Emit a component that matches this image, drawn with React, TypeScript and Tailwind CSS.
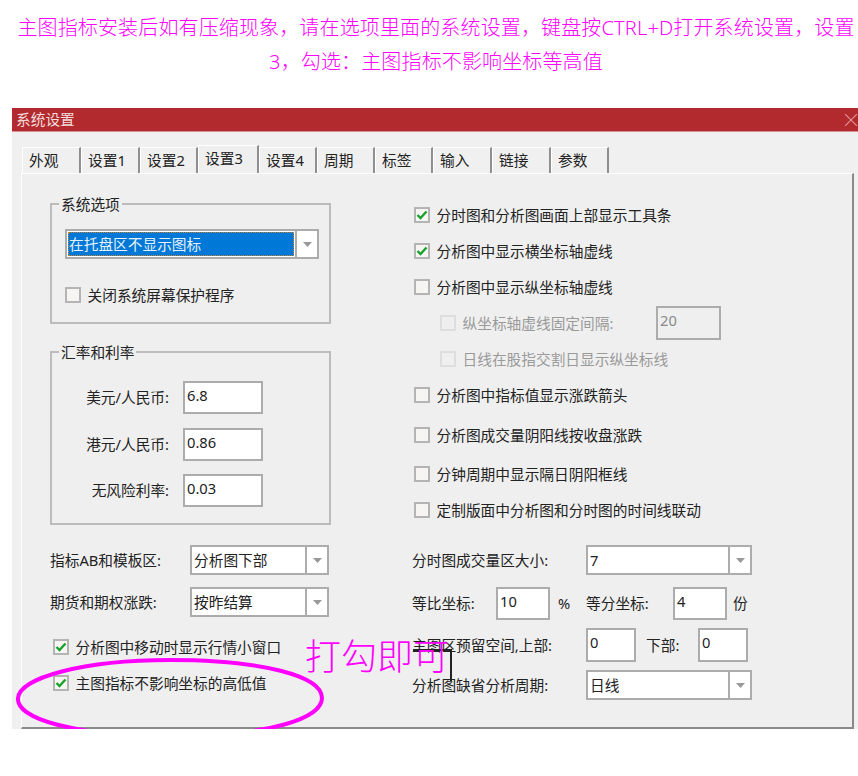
import React, { type ReactNode } from 'react';

const FONT = "font-['Noto_Sans','Noto_Sans_CJK_SC',sans-serif]";

const tabs = [
  { label: '外观', w: 'w-[59px]' },
  { label: '设置1', w: 'w-[59px]' },
  { label: '设置2', w: 'w-[58px]' },
  { label: '设置3', w: 'w-[61px]', active: true },
  { label: '设置4', w: 'w-[58px]' },
  { label: '周期', w: 'w-[58px]' },
  { label: '标签', w: 'w-[58px]' },
  { label: '输入', w: 'w-[59px]' },
  { label: '链接', w: 'w-[59px]' },
  { label: '参数', w: 'w-[58px]' },
];

function Arrow() {
  return (
    <svg width="9" height="5" viewBox="0 0 9 5">
      <path d="M0 0 H9 L4.5 5 Z" fill="#999999" />
    </svg>
  );
}

function Check({ label, checked, disabled }: { label: string; checked?: boolean; disabled?: boolean }) {
  return (
    <div className="flex h-5 items-center gap-[6.5px]">
      <span
        className={`flex h-4 w-4 shrink-0 items-center justify-center border-2 ${
          disabled ? 'border-[#dedede] bg-[#efefef]' : 'border-[#b4b4b4] bg-[#f6f5f2]'
        }`}
      >
        {checked && (
          <svg width="12" height="10" viewBox="0 0 12 10" fill="none">
            <path d="M1.5 5 L4.5 8 L10.5 1.5" stroke="#17a32b" strokeWidth="2.4" />
          </svg>
        )}
      </span>
      <span className={`whitespace-nowrap ${disabled ? 'text-[#9a9a9a]' : ''}`}>{label}</span>
    </div>
  );
}

function Combo({ value, w }: { value: ReactNode; w: string }) {
  return (
    <div className={`flex h-[30px] items-stretch border-2 border-[#acacac] bg-white ${w}`}>
      <div className="flex min-w-0 flex-1 items-center pl-[2px] whitespace-nowrap">{value}</div>
      <div className="flex w-[22px] items-center justify-center border-l-2 border-[#acacac]">
        <Arrow />
      </div>
    </div>
  );
}

function Box({ value, w, h = 'h-[33px]', muted }: { value: string; w: string; h?: string; muted?: boolean }) {
  return (
    <div
      className={`shrink-0 border-2 pl-[2px] pt-[2px] leading-5 ${w} ${h} ${
        muted ? 'border-[#acacac] bg-[#efefef] text-[#8a8a8a]' : 'border-[#acacac] bg-white'
      }`}
    >
      {value}
    </div>
  );
}

function Group({ title, className, children }: { title: string; className: string; children: ReactNode }) {
  return (
    <fieldset className={`border-2 border-[#bcbcbc] ${className}`}>
      <legend className="ml-[7px] px-[2px] leading-5">{title}</legend>
      {children}
    </fieldset>
  );
}

function Rate({ label, value }: { label: string; value: string }) {
  return (
    <div className="flex items-center">
      <span className="w-[117px] text-right">{label}</span>
      <div className="ml-[14px]">
        <Box value={value} w="w-[80px]" />
      </div>
    </div>
  );
}

export default function App() {
  return (
    <div className={`min-h-[776px] w-[858px] overflow-hidden bg-white ${FONT}`}>
      <div className="h-[108px] pl-[14px] pt-[11px] text-center text-[20px] font-light leading-[34px] tracking-[0.14px] text-[#ff00ff]">
        主图指标安装后如有压缩现象，请在选项里面的系统设置，键盘按CTRL+D打开系统设置，设置3，勾选：主图指标不影响坐标等高值
      </div>

      <div className="relative ml-[12px] h-[621px] w-[846px] overflow-hidden bg-[#f0f0f0] text-[14.7px] text-[#222]">
        <div className="flex h-6 items-center justify-between border-b border-[#d98f91] bg-[#b22a2e] pl-1 pr-[1px] text-[#f3dcdc]">
          <span>系统设置</span>
          <svg width="12" height="12" viewBox="0 0 12 12" stroke="#dc9496" strokeWidth="1.2">
            <path d="M0 0 L12 12 M12 0 L0 12" />
          </svg>
        </div>

        <div className="ml-[9px] w-[833px] pt-[13px]">
          <div className="ml-[1px] flex h-[28px] items-end">
            {tabs.map((t) => (
              <div
                key={t.label}
                className={`${t.w} flex items-center border-l border-t border-r-2 border-l-white border-t-white border-r-[#8f8f8f] pl-[6px] ${
                  t.active ? 'h-[28px] bg-[#efefef] pb-[2px]' : 'h-[26px] bg-[#f0f0f0]'
                }`}
              >
                {t.label}
              </div>
            ))}
          </div>

          <div className="flex h-[556px] border-b-2 border-l border-r-2 border-t border-b-[#8a8a8a] border-l-white border-r-[#8a8a8a] border-t-white bg-[#efefef] pl-[28px]">
            <div className="w-[281px] shrink-0 pt-[20px]">
              <Group title="系统选项" className="h-[130px]">
                <div className="pl-[13px] pt-[15px]">
                  <div className="flex h-[30px] w-[254px] items-stretch border-2 border-[#acacac] bg-white">
                    <div className="m-[1px] flex flex-1 items-center border border-dotted border-[#c9822a] bg-[#0078d7] text-[#e6f1fb]">
                      在托盘区不显示图标
                    </div>
                    <div className="flex w-[22px] items-center justify-center border-l-2 border-[#acacac]">
                      <Arrow />
                    </div>
                  </div>
                  <div className="mt-[26px]">
                    <Check label="关闭系统屏幕保护程序" />
                  </div>
                </div>
              </Group>

              <Group title="汇率和利率" className="mt-[18px] h-[183px]">
                <div className="flex flex-col gap-[13.5px] pt-[19px]">
                  <Rate label="美元/人民币:" value="6.8" />
                  <Rate label="港元/人民币:" value="0.86" />
                  <Rate label="无风险利率:" value="0.03" />
                </div>
              </Group>

              <div className="mt-[20px] flex flex-col gap-3">
                <div className="flex items-center">
                  <span className="w-[140px]">指标AB和模板区:</span>
                  <Combo value="分析图下部" w="w-[139px]" />
                </div>
                <div className="flex items-center">
                  <span className="w-[140px]">期货和期权涨跌:</span>
                  <Combo value="按昨结算" w="w-[139px]" />
                </div>
              </div>

              <div className="mt-[20px] flex flex-col gap-4 pl-[3px]">
                <Check checked label="分析图中移动时显示行情小窗口" />
                <Check checked label="主图指标不影响坐标的高低值" />
              </div>
            </div>

            <div className="ml-[81px] flex-1 pt-[31px]">
              <div className="flex flex-col pl-[2px]">
                <Check checked label="分时图和分析图画面上部显示工具条" />
                <div className="mt-4">
                  <Check checked label="分析图中显示横坐标轴虚线" />
                </div>
                <div className="mt-4">
                  <Check label="分析图中显示纵坐标轴虚线" />
                </div>
                <div className="mt-4 flex h-5 items-center pl-[26px]">
                  <div className="w-[216px]">
                    <Check disabled label="纵坐标轴虚线固定间隔:" />
                  </div>
                  <Box value="20" w="w-[65px]" h="h-[34px]" muted />
                </div>
                <div className="mt-4 pl-[26px]">
                  <Check disabled label="日线在股指交割日显示纵坐标线" />
                </div>
                <div className="mt-4">
                  <Check label="分析图中指标值显示涨跌箭头" />
                </div>
                <div className="mt-5">
                  <Check label="分析图成交量阴阳线按收盘涨跌" />
                </div>
                <div className="mt-[19px]">
                  <Check label="分钟周期中显示隔日阴阳框线" />
                </div>
                <div className="mt-4">
                  <Check label="定制版面中分析图和分时图的时间线联动" />
                </div>
              </div>

              <div className="mt-[25px] flex items-center">
                <span className="w-[174px]">分时图成交量区大小:</span>
                <Combo value="7" w="w-[166px]" />
              </div>
              <div className="mt-3 flex items-center">
                <span className="w-[84px]">等比坐标:</span>
                <Box value="10" w="w-[54px]" />
                <span className="ml-[8px] w-[28px]">%</span>
                <span className="w-[87px]">等分坐标:</span>
                <Box value="4" w="w-[54px]" />
                <span className="ml-[6px]">份</span>
              </div>
              <div className="mt-2 flex items-center">
                <span className="w-[174px]">主图区预留空间,上部:</span>
                <Box value="0" w="w-[50px]" h="h-[34px]" />
                <span className="ml-[10px] w-[52px]">下部:</span>
                <Box value="0" w="w-[50px]" h="h-[34px]" />
              </div>
              <div className="mt-2 flex items-center">
                <span className="w-[174px]">分析图缺省分析周期:</span>
                <Combo value="日线" w="w-[166px]" />
              </div>
            </div>
          </div>
        </div>

        {/* annotations drawn over the dialog */}
        <div className="absolute left-[401px] top-[541px] h-[2px] w-[39px] bg-[#222]" />
        <div className="absolute left-[438px] top-[541px] h-[32px] w-[2px] bg-[#222]" />
        <div className="absolute left-[293px] top-[526px] whitespace-nowrap text-[36px] font-extralight leading-[46px] text-[#ff00ff]">
          打勾即可
        </div>
        <svg className="absolute left-0 top-[544px]" width="330" height="77" viewBox="0 0 330 77" fill="none">
          <path
            d="M6 46 C8 26 70 8 158 8 C250 8 310 24 310 46 C310 66 260 84 158 84 C60 84 4 66 6 46 Z"
            stroke="#ff00ff"
            strokeWidth="4"
          />
        </svg>
      </div>
    </div>
  );
}
